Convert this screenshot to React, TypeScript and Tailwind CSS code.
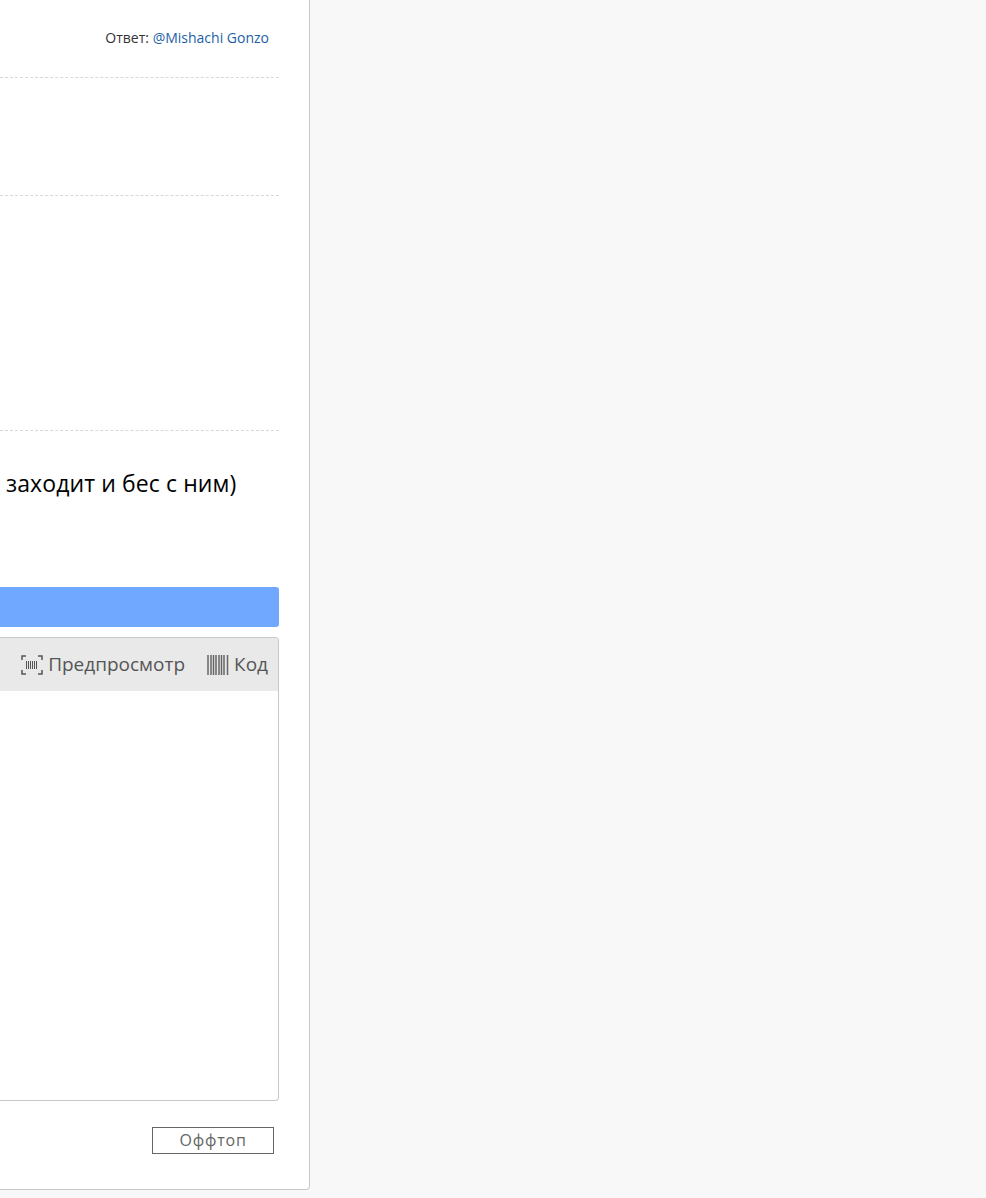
const font = { fontFamily: '"Open Sans", "Noto Sans", sans-serif' }

function ScanIcon() {
  return (
    <svg width="22" height="20" viewBox="0 0 22 20" fill="none" className="shrink-0">
      <path d="M5 1H1v4M17 1h4v4M5 19H1v-4M17 19h4v-4" stroke="#555" strokeWidth="1.500" />
      <path d="M5.500 6v8M7.500 6v8M9.500 6v8M11.500 6v8M13.500 6v8M15.500 6v8" stroke="#555" strokeWidth="1" />
    </svg>
  )
}

function BarcodeIcon() {
  return (
    <svg width="22" height="20" viewBox="0 0 22 20" fill="none" className="shrink-0">
      <path d="M1 0v20M4 0v20M6.500 0v20M9 0v20M12 0v20M14.500 0v20M17 0v20M20.500 0v20" stroke="#666" strokeWidth="1.500" />
    </svg>
  )
}

export default function App() {
  return (
    <div className="w-[986px] h-[1198px] overflow-hidden bg-[#f8f8f8]" style={font}>
      <div className="w-[310px] h-[1190px] bg-white border-r border-b border-[#c8c8c8] rounded-br-[4px] pr-[30px] flex flex-col">
        {/* Posts */}
        <div className="h-[78px] border-b border-dashed border-[#d8d8d8] flex justify-end pt-[29px] pr-[10px]">
          <p className="text-[14px] leading-[18px] text-[#333] whitespace-nowrap">
            Ответ: <span className="text-[#1c5fa8]">@Mishachi Gonzo</span>
          </p>
        </div>
        <div className="h-[118px] border-b border-dashed border-[#d8d8d8]"></div>
        <div className="h-[235px] border-b border-dashed border-[#d8d8d8]"></div>
        <div className="h-[156px] pt-[37px] pl-[6px]">
          <p className="text-[23px] leading-[30px] tracking-[0.1px] text-black whitespace-nowrap">заходит и бес с ним)</p>
        </div>

        {/* Reply editor */}
        <div className="h-[40px] bg-[#70a7ff] rounded-r-[3px]"></div>
        <div className="mt-[10px] h-[464px] border-r border-b border-t border-[#c8c8c8] rounded-r-[4px] overflow-hidden">
          <div className="h-[53px] bg-[#e9e9e9] flex items-center justify-end pr-[10px] text-[19px] text-[#555]">
            <div className="flex items-center gap-[5px]">
              <ScanIcon />
              <span>Предпросмотр</span>
            </div>
            <div className="flex items-center gap-[5px] ml-[22px]">
              <BarcodeIcon />
              <span>Код</span>
            </div>
          </div>
        </div>
        <div className="flex justify-end pr-[5px] mt-[26px]">
          <button className="w-[122px] h-[27px] border border-[#666] bg-white text-[16px] leading-[25px] text-[#666] tracking-[0.8px]">Оффтоп</button>
        </div>
      </div>
    </div>
  )
}
